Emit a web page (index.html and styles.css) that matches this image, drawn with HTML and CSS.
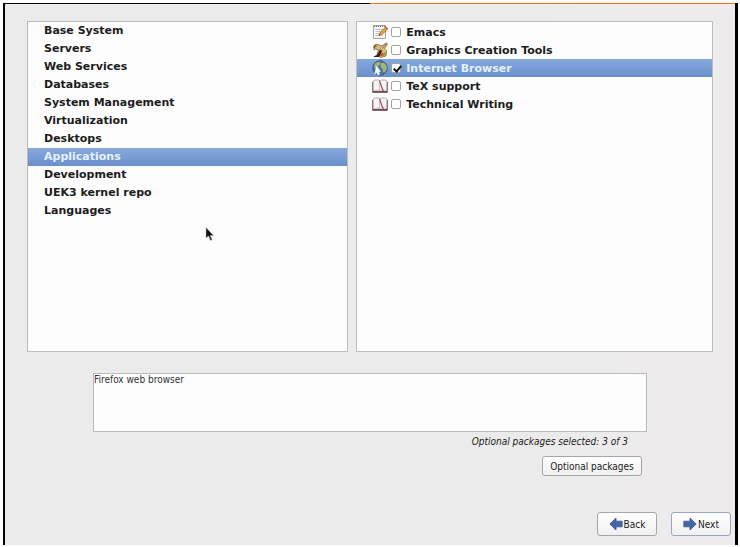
FILE: index.html
```
<!DOCTYPE html>
<html lang="en">
<head>
  <meta charset="UTF-8">
  <meta name="viewport" content="width=device-width, initial-scale=1.0">
  <title>Package Selection</title>
  <link rel="stylesheet" href="styles.css">
</head>
<body>
  <svg class="sprites" width="0" height="0">
    <symbol id="icon-book" viewBox="0 0 16 16">
      <path d="M1 13V3l2-1h4l1 1 1-1h4l2 1v10z" fill="#f6f5f5" stroke="#a9a2a3" stroke-width=".8"/>
      <path d="M.7 4v9.800h14.600V4" fill="none" stroke="#7d6267" stroke-width="1"/>
      <path d="M.5 14h15" stroke="#5f4147" stroke-width="1.500"/>
      <path d="M2 12h5l1 .7 1-.7h5" fill="none" stroke="#cfc8c9" stroke-width=".8"/>
      <path d="M7.300 3c1.800 2 1.600 6 4 10" fill="none" stroke="#b04a5a" stroke-width="1.300"/>
      <path d="M7.500 4v8.500" stroke="#b5adae" stroke-width=".7"/>
    </symbol>
  </svg>

  <div class="window">
    <div class="top-edge"></div>
    <main class="content">
      <div class="lists">
        <ul class="list categories">
          <li><button type="button">Base System</button></li>
          <li><button type="button">Servers</button></li>
          <li><button type="button">Web Services</button></li>
          <li><button type="button">Databases</button></li>
          <li><button type="button">System Management</button></li>
          <li><button type="button">Virtualization</button></li>
          <li><button type="button">Desktops</button></li>
          <li><button type="button" class="selected">Applications</button></li>
          <li><button type="button">Development</button></li>
          <li><button type="button">UEK3 kernel repo</button></li>
          <li><button type="button">Languages</button></li>
        </ul>

        <ul class="list groups">
          <li>
            <label>
              <svg class="group-icon" viewBox="0 0 16 16">
                <path d="M1.500 1.500h12v13h-12z" fill="#f4f4f2" stroke="#a5a5a2"/>
                <path d="M2 2.200h11" stroke="#777" stroke-width="1.400" stroke-dasharray="1 1"/>
                <path d="M3.500 5.500h7M3.500 7.500h5M3.500 9.500h4M3.500 11.500h6" stroke="#b9b9b6" stroke-width=".8"/>
                <path d="M7 11.500l1-3 5.500-5.300 2 2L10 10.600z" fill="#e8a33c" stroke="#8f5e23" stroke-width=".7"/>
                <path d="M13 3.600l1-1 2 2-1 1z" fill="#c8503c"/>
                <path d="M7 11.500l.5-1.500 1 1z" fill="#333"/>
              </svg>
              <input type="checkbox">
              <span>Emacs</span>
            </label>
          </li>
          <li>
            <label>
              <svg class="group-icon" viewBox="0 0 16 16">
                <path d="M2 3.500c2-2 4-1 5-.5l3 1 4-3 1.500 1-3 4.500 2 2-.5 5.500-6 1.500-3-3.500 1.500-4-3-1-1.500 1z" fill="#d9b978" stroke="#83663b" stroke-width=".8"/>
                <path d="M15 1L7 8l1.500 1.200z" fill="#f0dcb2" stroke="#87683d" stroke-width=".6"/>
                <path d="M8.500 7.500C6.500 9 6 13 3.500 13.500L1 15h6c2-1.500 2-4 3-6z" fill="#282523"/>
                <circle cx="10" cy="12.500" r="1.800" fill="#da4a36"/>
                <circle cx="13" cy="12" r="1.500" fill="#7fa83b"/>
                <circle cx="12.500" cy="8.800" r="1.300" fill="#eac23b"/>
                <path d="M1.500 5.500l3-2" stroke="#6d4827" stroke-width="1.400"/>
              </svg>
              <input type="checkbox">
              <span>Graphics Creation Tools</span>
            </label>
          </li>
          <li>
            <label class="selected">
              <svg class="group-icon" viewBox="0 0 16 16">
                <circle cx="8" cy="8" r="7.200" fill="#4d769f" stroke="#365574"/>
                <path d="M3 3.500l3-1.700 2.500.7-.8 2.500-2 1-1.500 2.500L2 7.500zM9 3l3.500-.2 2 3.200.4 3-2 3.500-1.800-.5-.4-3L8.500 7z" fill="#a3b477"/>
                <path d="M4.500 6l4 5.500-1.700.2.900 2.800-2 .5-1-2.500-2 1.500z" fill="#fff" stroke="#dce8f2" stroke-width=".6"/>
              </svg>
              <input type="checkbox" checked>
              <span>Internet Browser</span>
            </label>
          </li>
          <li>
            <label>
              <svg class="group-icon"><use href="#icon-book"/></svg>
              <input type="checkbox">
              <span>TeX support</span>
            </label>
          </li>
          <li>
            <label>
              <svg class="group-icon"><use href="#icon-book"/></svg>
              <input type="checkbox">
              <span>Technical Writing</span>
            </label>
          </li>
        </ul>
      </div>

      <section class="details">
        <textarea class="description" aria-label="Description" readonly>Firefox web browser</textarea>
        <p class="package-count">Optional packages selected: 3 of 3</p>
        <button type="button" class="button optional">Optional packages</button>
      </section>
    </main>

    <footer class="nav">
      <button type="button" class="button">
        <svg class="arrow" viewBox="0 0 14 14"><path d="M.8 7L7 1v3.200h6.200v5.600H7V13z" fill="#4067a8" stroke="#3a5688" stroke-width=".8"/></svg>
        Back
      </button>
      <button type="button" class="button next">
        <svg class="arrow" viewBox="0 0 14 14"><path d="M13.200 7L7 1v3.200H.8v5.600H7V13z" fill="#4067a8" stroke="#3a5688" stroke-width=".8"/></svg>
        Next
      </button>
    </footer>
  </div>

  <svg class="cursor" viewBox="0 0 10 14"><path d="M1 .5v10.500l2.500-2 2 4.500 1.600-.8-2-4.200H8.500z" fill="#111" stroke="#bbb" stroke-width=".5"/></svg>
</body>
</html>
```
FILE: styles.css
```
* {
  box-sizing: border-box;
}
body {
  margin: 0;
  padding: 3px 2px 2px 3px;
  background: #fff;
  color: #1c1c1c;
  font-family: "DejaVu Sans Condensed", "DejaVu Sans", sans-serif;
  font-size: 10px;
}
.sprites {
  position: absolute;
}
.window {
  display: flex;
  flex-direction: column;
  min-height: calc(100vh - 5px);
  border: solid #000;
  border-width: 0 3px 0 2px;
  background: linear-gradient(90deg, #ebebeb 60%, #eeebec);
}
.top-edge {
  height: 1px;
  background: linear-gradient(90deg, #000 50%, #ff6f1a 50%);
}
.content {
  flex: 1;
  padding: 17px 22px 0;
}
.lists {
  display: flex;
  gap: 8px;
  height: 331px;
}
.list {
  margin: 0;
  padding: 0;
  list-style: none;
  background: #fdfdfe;
  border: 1px solid #bcbebd;
  font-family: "DejaVu Sans", sans-serif;
  font-size: 11px;
  font-weight: bold;
}
.categories {
  flex: 9;
}
.groups {
  flex: 10;
  padding-top: 1px;
}
.categories button {
  display: block;
  width: 100%;
  height: 18px;
  padding: 0 16px;
  border: none;
  background: none;
  color: inherit;
  font: inherit;
  line-height: 18px;
  text-align: left;
}
.groups label {
  display: flex;
  align-items: center;
  height: 18px;
  padding-left: 15px;
}
.list .selected {
  background: linear-gradient(#86a9dc, #6a8fcb);
  color: #e4f1ff;
}
.group-icon {
  width: 16px;
  height: 16px;
  margin-right: 3px;
}
.groups input {
  appearance: none;
  width: 10px;
  height: 10px;
  margin: 0 5px 0 0;
  background: #fff;
  border: 1px solid #a2a2a2;
  border-radius: 2px;
}
.groups input:checked::before {
  content: "";
  display: block;
  width: 3px;
  height: 6px;
  margin-left: 3px;
  border: solid #111;
  border-width: 0 2px 2px 0;
  transform: rotate(40deg);
}
.details {
  display: flex;
  flex-direction: column;
  align-items: flex-end;
  padding: 21px 66px 0;
}
.description {
  display: block;
  width: 100%;
  height: 59px;
  padding: 0;
  background: #fdfdfe;
  border: 1px solid #b9bbba;
  color: #333;
  font: inherit;
  line-height: 12px;
  resize: none;
}
.package-count {
  margin: 4px 19px 8px;
  font-style: italic;
  line-height: 12px;
}
.button {
  display: flex;
  align-items: center;
  justify-content: center;
  width: 60px;
  height: 24px;
  padding: 0;
  background: linear-gradient(#fff, #f0f0f1);
  border: 1px solid #a3a5aa;
  border-radius: 3px;
  color: #222;
  font: inherit;
}
.optional {
  width: 100px;
  height: 20px;
  margin-right: 5px;
}
.nav {
  display: flex;
  justify-content: flex-end;
  gap: 14px;
  padding: 0 4px 9px;
}
.next {
  border-color: #9ba5bd;
}
.arrow {
  width: 14px;
  height: 14px;
  margin-right: 1px;
}
.cursor {
  position: absolute;
  top: 227px;
  left: 205px;
  width: 10px;
  height: 14px;
}
```
